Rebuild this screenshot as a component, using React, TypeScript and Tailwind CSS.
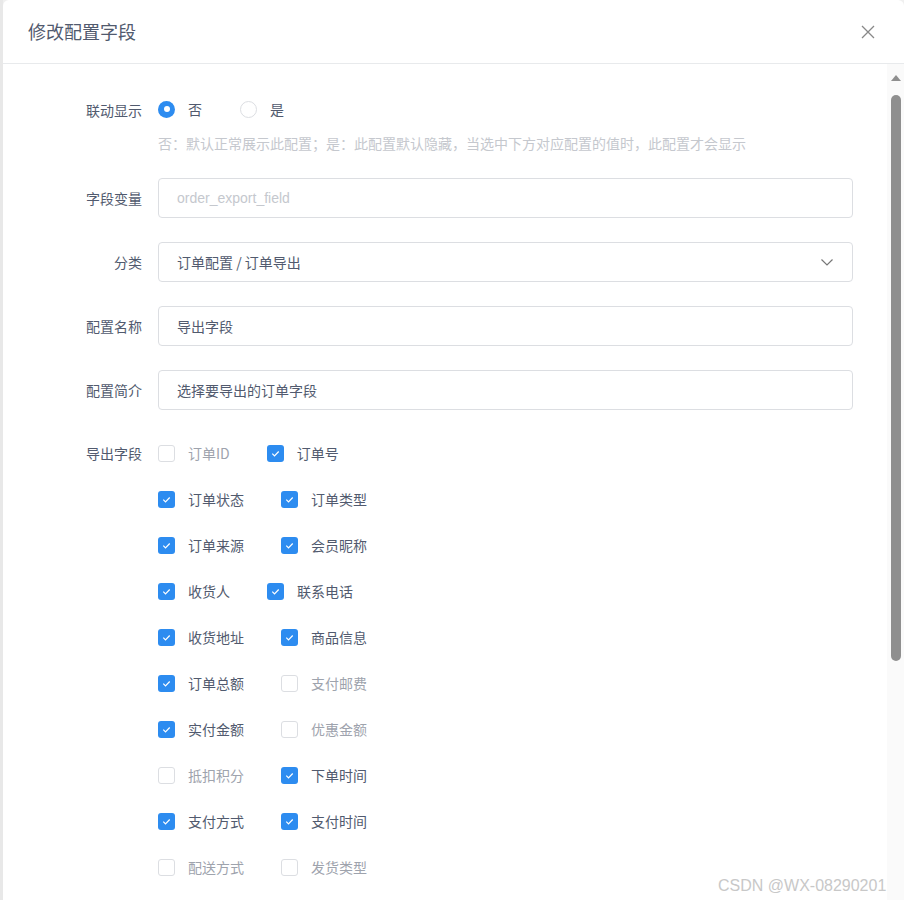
import React from "react";

const rows: [string, boolean][][] = [
  [["订单ID", false], ["订单号", true]],
  [["订单状态", true], ["订单类型", true]],
  [["订单来源", true], ["会员昵称", true]],
  [["收货人", true], ["联系电话", true]],
  [["收货地址", true], ["商品信息", true]],
  [["订单总额", true], ["支付邮费", false]],
  [["实付金额", true], ["优惠金额", false]],
  [["抵扣积分", false], ["下单时间", true]],
  [["支付方式", true], ["支付时间", true]],
  [["配送方式", false], ["发货类型", false]],
];

function Box({ on }: { on: boolean }) {
  return on ? (
    <span className="w-[17px] h-[17px] rounded-[3px] bg-[#2d8cf0] flex items-center justify-center">
      <svg width="11" height="11" viewBox="0 0 12 12"><path d="M2.5 6.2l2.4 2.4 4.6-4.8" fill="none" stroke="#fff" strokeWidth="1.3" /></svg>
    </span>
  ) : (
    <span className="w-[17px] h-[17px] rounded-[3px] border border-[#dcdee2] bg-white" />
  );
}

function Label({ children }: { children: React.ReactNode }) {
  return <div className="w-[155px] pr-[16px] text-right text-[14px] text-[#515a6e] shrink-0">{children}</div>;
}

export default function App() {
  return (
    <div className="w-[904px] h-[900px] bg-[#f0f0f0] flex overflow-hidden" style={{ fontFamily: "'Noto Sans CJK SC', 'Liberation Sans', sans-serif" }}>
      <div className="w-[3px] shrink-0 bg-[#e8e8e8]" />
      <div className="flex-1 bg-white rounded-t-[6px] flex flex-col">
        <div className="h-[64px] border-b border-[#e8eaec] flex items-center justify-between pl-[25px] pr-[28px]">
          <span className="text-[18px] text-[#515a6e]">修改配置字段</span>
          <svg width="16" height="16" viewBox="0 0 16 16"><path d="M2 2l12 12M14 2L2 14" stroke="#888" strokeWidth="1.3" /></svg>
        </div>
        <div className="flex flex-1 min-h-0">
          <div className="flex-1 text-[14px] text-[#515a6e]">
            <div className="flex items-start pt-[36px]">
              <Label>联动显示</Label>
              <div className="flex flex-col">
                <div className="flex items-center h-[20px] -mt-[1px]">
                  <span className="w-[17px] h-[17px] rounded-full bg-[#2d8cf0] flex items-center justify-center"><span className="w-[6px] h-[6px] rounded-full bg-white" /></span>
                  <span className="ml-[13px]">否</span>
                  <span className="ml-[38px] w-[17px] h-[17px] rounded-full border border-[#dcdee2]" />
                  <span className="ml-[13px]">是</span>
                </div>
                <div className="mt-[14px] text-[#c5c8ce]">否：默认正常展示此配置；是：此配置默认隐藏，当选中下方对应配置的值时，此配置才会显示</div>
              </div>
            </div>
            {[
              ["字段变量", "order_export_field", true, false],
              ["分类", "订单配置 / 订单导出", false, true],
              ["配置名称", "导出字段", false, false],
              ["配置简介", "选择要导出的订单字段", false, false],
            ].map(([l, v, ph, sel], i) => (
              <div key={i} className="flex items-center mt-[24px]">
                <Label>{l as string}</Label>
                <div className="w-[695px] h-[40px] border border-[#dcdee2] rounded-[4px] flex items-center justify-between px-[18px]">
                  <span className={ph ? "text-[#c5c8ce]" : "text-[#515a6e]"} style={ph ? { fontFamily: "'Liberation Sans', sans-serif" } : undefined}>{v as string}</span>
                  {sel && <svg width="14" height="14" viewBox="0 0 14 14"><path d="M1.5 4.5l5.5 5.5 5.5-5.5" fill="none" stroke="#777" strokeWidth="1.2" /></svg>}
                </div>
              </div>
            ))}
            <div className="flex items-start mt-[33px]">
              <Label>导出字段</Label>
              <div className="flex flex-col gap-[26px]">
                {rows.map((r, i) => (
                  <div key={i} className="flex items-center h-[20px]">
                    {r.map(([t, on], j) => (
                      <div key={j} className="flex items-center mr-[37px]">
                        <Box on={on} />
                        <span className={`ml-[13px] ${on ? "text-[#515a6e]" : "text-[#9ea3ad]"}`}>{t}</span>
                      </div>
                    ))}
                  </div>
                ))}
              </div>
            </div>
          </div>
          <div className="w-[17px] bg-[#fafafa] flex flex-col items-center pt-[10px]">
            <svg width="10" height="7" viewBox="0 0 10 7"><path d="M0 7L5 1l5 6z" fill="#8f8f8f" /></svg>
            <div className="mt-[14px] w-[10px] h-[566px] rounded-full bg-[#8f8f8f]" />
          </div>
        </div>
      </div>
      <div className="absolute left-[718px] top-[874px] text-[16px] text-[#c8c8c8]" style={{ fontFamily: "'Liberation Sans', sans-serif" }}>CSDN @WX-08290201</div>
    </div>
  );
}
